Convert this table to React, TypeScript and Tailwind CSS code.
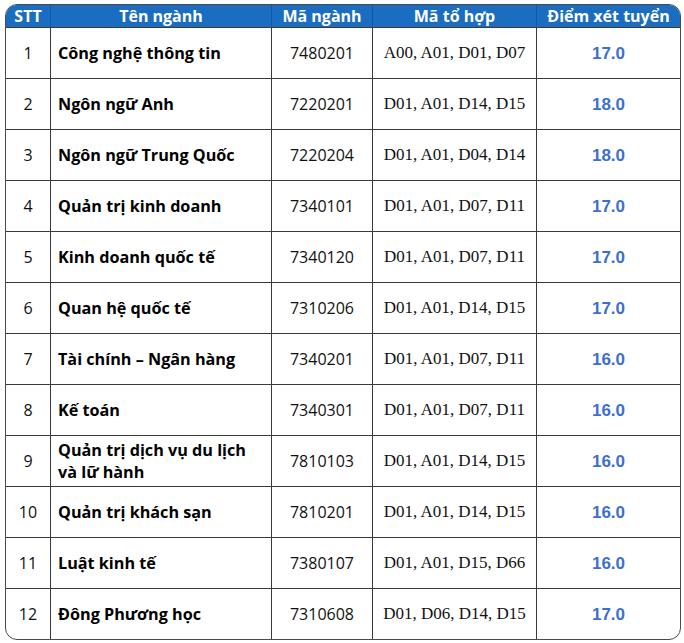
import React from "react";

const rows = [
  ["1", "Công nghệ thông tin", "7480201", "A00, A01, D01, D07", "17.0"],
  ["2", "Ngôn ngữ Anh", "7220201", "D01, A01, D14, D15", "18.0"],
  ["3", "Ngôn ngữ Trung Quốc", "7220204", "D01, A01, D04, D14", "18.0"],
  ["4", "Quản trị kinh doanh", "7340101", "D01, A01, D07, D11", "17.0"],
  ["5", "Kinh doanh quốc tế", "7340120", "D01, A01, D07, D11", "17.0"],
  ["6", "Quan hệ quốc tế", "7310206", "D01, A01, D14, D15", "17.0"],
  ["7", "Tài chính – Ngân hàng", "7340201", "D01, A01, D07, D11", "16.0"],
  ["8", "Kế toán", "7340301", "D01, A01, D07, D11", "16.0"],
  ["9", "Quản trị dịch vụ du lịch\nvà lữ hành", "7810103", "D01, A01, D14, D15", "16.0"],
  ["10", "Quản trị khách sạn", "7810201", "D01, A01, D14, D15", "16.0"],
  ["11", "Luật kinh tế", "7380107", "D01, A01, D15, D66", "16.0"],
  ["12", "Đông Phương học", "7310608", "D01, D06, D14, D15", "17.0"],
];

const sans = "font-['Open_Sans',sans-serif]";

const App = () => {
  return (
    <div className="w-[684px] h-[643px] bg-white pt-[4px] pl-[5px]">
      <div className="w-[676px] border border-[#4a4a4a] rounded-[12px] overflow-hidden">
        <div className="grid grid-cols-[44px_221px_101px_164px_1fr]">
          {["STT", "Tên ngành", "Mã ngành", "Mã tổ hợp", "Điểm xét tuyển"].map((h, i) => (
            <div
              key={h}
              className={`h-[22px] bg-[#1b6dc1] text-white font-bold text-[16px] leading-[22px] text-center ${sans} ${i > 0 ? "border-l border-[#0e5aa3]" : ""}`}
            >
              {h}
            </div>
          ))}
          {rows.map((r) => (
            <React.Fragment key={r[0]}>
              <div className={`h-[51px] border-t border-[#3a3a3a] flex items-center justify-center text-[16px] text-[#111] ${sans}`}>
                {r[0]}
              </div>
              <div className={`h-[51px] border-t border-l border-[#3a3a3a] flex items-center pl-[7px] font-bold text-[16.2px] leading-[22px] text-black whitespace-pre-line ${sans}`}>
                {r[1]}
              </div>
              <div className={`h-[51px] border-t border-l border-[#3a3a3a] flex items-center justify-center text-[16px] text-[#111] ${sans}`}>
                {r[2]}
              </div>
              <div className="h-[51px] border-t border-l border-[#3a3a3a] flex items-center justify-center text-[17px] text-[#111] font-['Liberation_Serif',serif]">
                {r[3]}
              </div>
              <div className="h-[51px] border-t border-l border-[#3a3a3a] flex items-center justify-center pt-[2px] text-[17px] font-bold text-[#3b6fd0] font-['Liberation_Sans',sans-serif]">
                {r[4]}
              </div>
            </React.Fragment>
          ))}
        </div>
      </div>
    </div>
  );
};

export default App;
